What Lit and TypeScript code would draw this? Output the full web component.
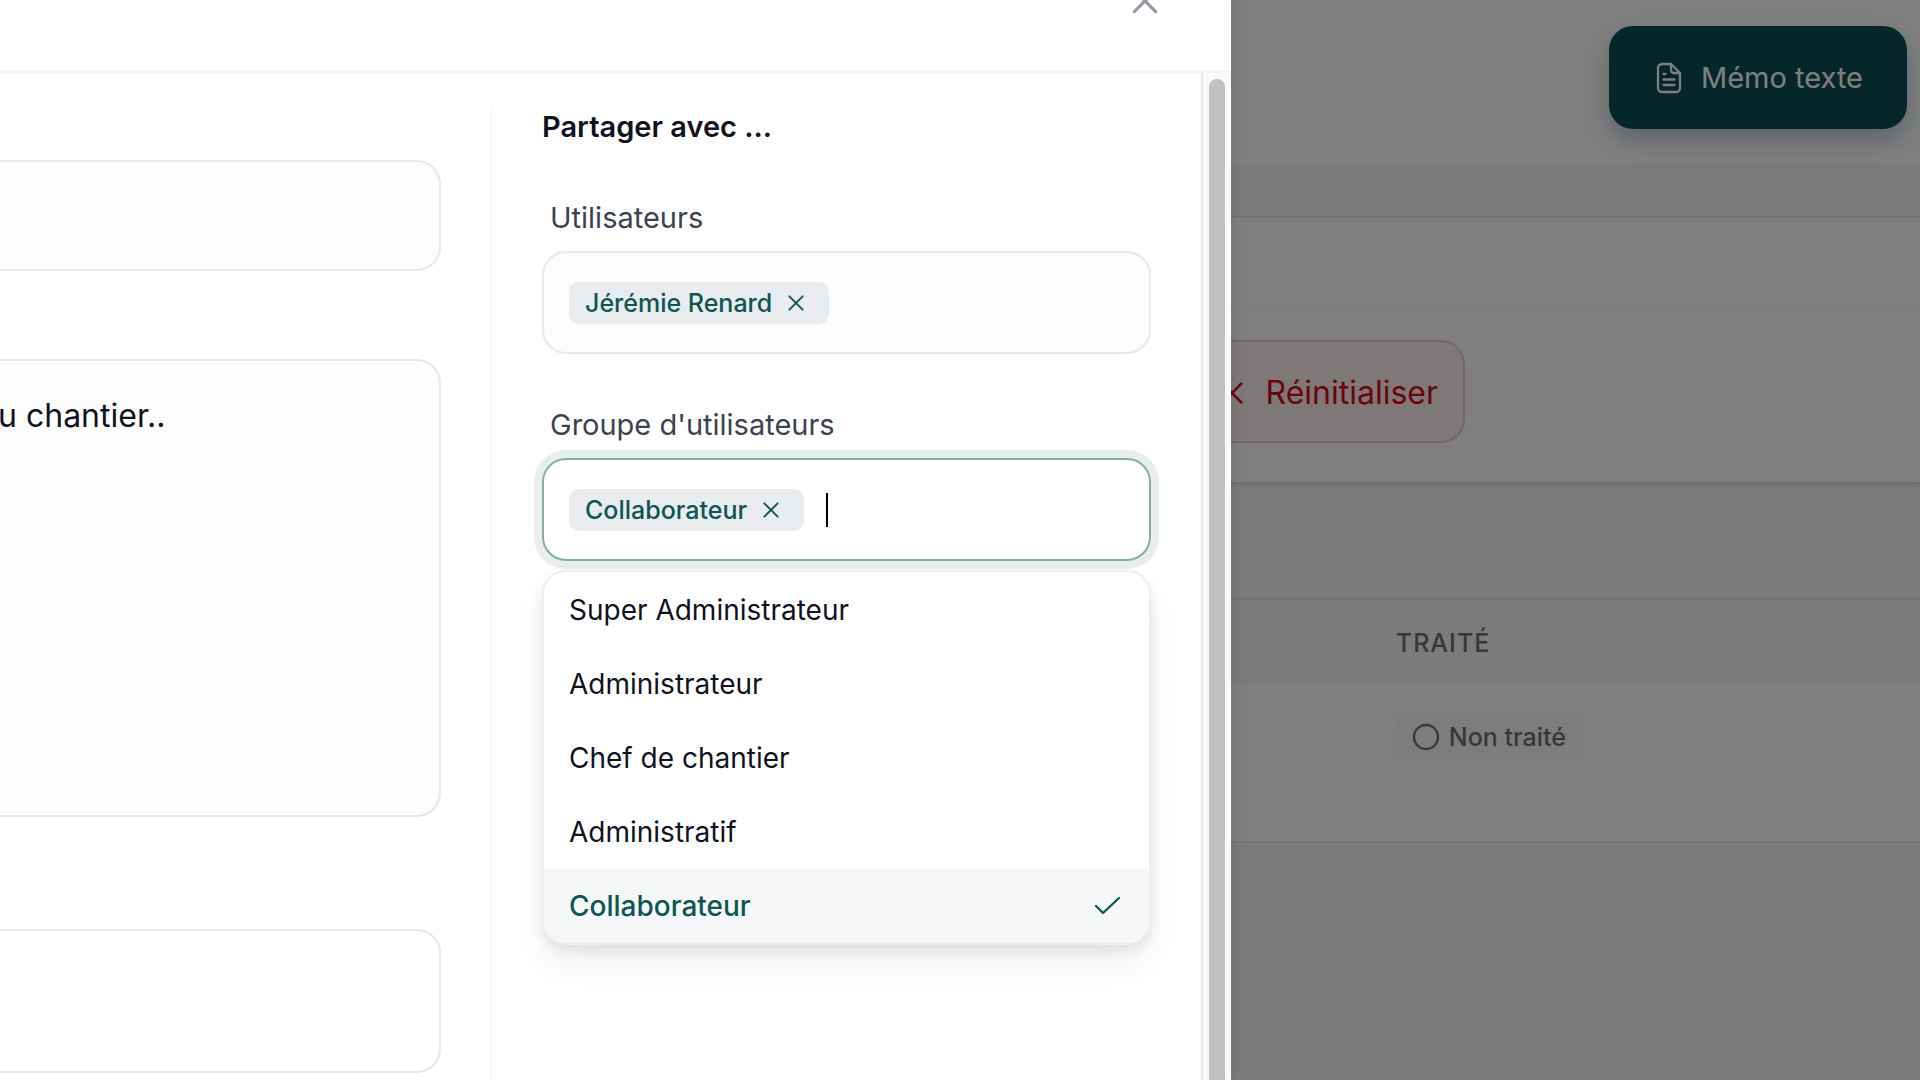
import { LitElement, html, css } from "lit";
import { customElement, state } from "lit/decorators.js";

const cross = (size: string) => html`<svg class="icon ${size}" viewBox="0 0 24 24" aria-hidden="true">
  <path d="M4 4 20 20M20 4 4 20" />
</svg>`;

@customElement("app-root")
export class AppRoot extends LitElement {
  @state() private users = ["Jérémie Renard"];
  @state() private groups = ["Collaborateur"];

  private options = [
    "Super Administrateur",
    "Administrateur",
    "Chef de chantier",
    "Administratif",
    "Collaborateur",
  ];

  static styles = css`
    :host {
      display: block;
      font-family: Inter, "Liberation Sans", sans-serif;
      color: #10131f;
    }
    * {
      box-sizing: border-box;
    }
    button,
    input,
    textarea {
      font: inherit;
      color: inherit;
      margin: 0;
    }
    button {
      cursor: pointer;
    }
    .screen {
      display: grid;
      grid-template-columns: minmax(0, 1231fr) minmax(0, 689fr);
      grid-template-rows: 100vh;
      overflow: hidden;
    }
    .page,
    .backdrop {
      grid-area: 1 / 1 / 2 / 3;
    }
    .dialog {
      grid-area: 1 / 1 / 2 / 2;
    }
    .icon {
      display: block;
      flex: none;
      fill: none;
      stroke: currentColor;
      stroke-width: 2.3;
      stroke-linecap: round;
      stroke-linejoin: round;
    }
    .s20 {
      width: 20px;
      height: 20px;
    }
    .s28 {
      width: 28px;
      height: 28px;
    }
    .s32 {
      width: 32px;
      height: 32px;
    }
    .s40 {
      width: 40px;
      height: 40px;
    }

    /* page behind the dialog */
    .page {
      background: #f4f8f6;
      min-width: 0;
    }
    .topbar {
      display: flex;
      justify-content: flex-end;
      align-items: flex-start;
      height: 164px;
      padding: 26px 13px 0;
      background: #ffffff;
    }
    .memo {
      display: flex;
      align-items: center;
      gap: 12px;
      height: 103px;
      padding: 0 44px 0 40px;
      border: 0;
      border-radius: 24px;
      background: #0c4e55;
      color: #ffffff;
      font-size: 29px;
      box-shadow: 0 12px 24px rgba(40, 80, 110, 0.3);
    }
    .filters {
      margin-top: 52px;
      border-top: 2px solid #e6e9e8;
      border-bottom: 2px solid #dcdfde;
      background: #ffffff;
      box-shadow: 0 2px 4px rgba(0, 0, 0, 0.06);
    }
    .filters-head {
      height: 92px;
      border-bottom: 1px solid #f4f5f5;
    }
    .filters-body {
      display: grid;
      grid-template-columns: minmax(0, 1465fr) minmax(0, 455fr);
      padding: 30px 0 39px;
    }
    .reset {
      justify-self: end;
      display: flex;
      align-items: center;
      gap: 20px;
      height: 103px;
      padding: 2px 25px 0;
      border: 2px solid #f3c6cb;
      border-radius: 24px;
      background: #fdf0f0;
      color: #d8081c;
      font-size: 32px;
    }
    .table {
      width: 100%;
      margin-top: 114px;
      border-collapse: collapse;
      table-layout: fixed;
      border-top: 2px solid #e3e7e5;
      border-bottom: 2px solid #e9ecea;
      background: #ffffff;
      font-size: 25px;
      font-weight: 500;
      color: #6c7078;
    }
    .table th {
      height: 86px;
      padding: 0;
      background: #f4f8f6;
      text-align: left;
      font-weight: 500;
      letter-spacing: 1px;
      text-transform: uppercase;
    }
    .table td {
      height: 157px;
      padding: 31px 0 0;
      vertical-align: top;
    }
    .col-rest {
      width: 72.7%;
    }
    .badge {
      display: flex;
      align-items: center;
      gap: 9px;
      width: fit-content;
      height: 42px;
      padding: 0 16px;
      border-radius: 8px;
      background: #f8faf9;
    }
    .backdrop {
      background: rgba(0, 0, 0, 0.5);
    }

    /* dialog */
    .dialog {
      display: flex;
      flex-direction: column;
      min-width: 0;
      min-height: 0;
      background: #ffffff;
      box-shadow: 0 0 14px rgba(0, 0, 0, 0.12);
    }
    .dialog-head {
      display: flex;
      flex: none;
      align-items: center;
      justify-content: flex-end;
      height: 142px;
      margin-top: -69px;
      padding-right: 70px;
      border-bottom: 2px solid #f5f6f6;
    }
    .close {
      padding: 0;
      border: 0;
      background: none;
      color: #9398a3;
    }
    .dialog-body {
      display: flex;
      flex: 1;
      min-height: 0;
      overflow: hidden;
    }
    .columns {
      flex: 1;
      min-width: 0;
      display: grid;
      grid-template-columns: minmax(0, 491fr) minmax(0, 710fr);
      padding-top: 34px;
    }
    .memo-fields {
      display: flex;
      flex-direction: column;
      padding: 53px 50px 0 0;
      margin-left: -28px;
    }
    .box {
      display: block;
      width: 100%;
      border: 2px solid #e6e8eb;
      border-radius: 24px;
      background: #fcfcfd;
      outline: 0;
      resize: none;
    }
    .title {
      height: 111px;
      padding: 0 24px;
      font-size: 32px;
    }
    .text {
      height: 458px;
      margin-top: 88px;
      padding: 33px 24px;
      font-size: 32px;
      line-height: 44px;
      overflow: hidden;
    }
    .files {
      height: 144px;
      margin-top: 112px;
      background: #ffffff;
    }
    .share {
      padding: 0 50px;
      border-left: 1px solid #f0f1f3;
      font-size: 28px;
      line-height: 40px;
    }
    .share-title {
      margin: 0;
      font-size: 29px;
      font-weight: 600;
    }
    .label {
      display: block;
      margin: 51px 0 13px;
      padding-left: 8px;
      color: #3d4252;
      font-size: 29px;
    }
    .picker {
      position: relative;
    }
    .field {
      display: flex;
      align-items: center;
      height: 103px;
      padding: 0 25px;
      border: 2px solid #e6e8eb;
      border-radius: 24px;
      background: #fcfcfd;
    }
    .field.open {
      border-color: #86aea8;
      background: #ffffff;
      box-shadow: 0 0 0 8px #e8eeee;
    }
    .chip {
      display: flex;
      flex: none;
      align-items: center;
      gap: 14px;
      height: 42px;
      padding: 0 23px 0 16px;
      border-radius: 10px;
      background: #e8ecee;
      color: #0d5651;
      font-size: 25px;
      font-weight: 500;
    }
    .chip-x {
      padding: 0;
      border: 0;
      background: none;
    }
    .caret {
      flex: none;
      width: 2px;
      height: 34px;
      margin-left: 22px;
      background: #000000;
    }
    .query {
      flex: 1;
      min-width: 0;
      padding: 0;
      border: 0;
      outline: 0;
      background: transparent;
      caret-color: transparent;
    }
    .menu {
      position: absolute;
      top: calc(100% + 9px);
      left: 0;
      right: 0;
      padding-top: 1px;
      border: 2px solid #eceef0;
      border-radius: 24px;
      background: #ffffff;
      overflow: hidden;
      box-shadow: 0 20px 36px rgba(0, 0, 0, 0.06), 0 6px 12px rgba(0, 0, 0, 0.08);
    }
    .option {
      display: flex;
      align-items: center;
      justify-content: space-between;
      width: 100%;
      height: 74px;
      padding: 0 25px;
      border: 0;
      background: none;
      text-align: left;
    }
    .option.selected {
      background: #f4f6f8;
      color: #0d5651;
      font-weight: 500;
    }
    .track {
      flex: none;
      width: 30px;
      padding: 6px 6px 0;
      border-left: 2px solid #e8e8e8;
      background: #fafafa;
    }
    .thumb {
      height: 100%;
      border-radius: 8px 8px 0 0;
      background: #c1c1c1;
    }
  `;

  private toggle(name: string) {
    this.groups = this.groups.includes(name)
      ? this.groups.filter((g) => g !== name)
      : [...this.groups, name];
  }

  private chip(name: string, remove: () => void) {
    return html`<span class="chip">${name}<button class="chip-x" aria-label="Retirer ${name}" @click=${remove}>${cross("s20")}</button></span>`;
  }

  private renderPage() {
    return html`<main class="page">
      <header class="topbar">
        <button class="memo">
          <svg class="icon s40" viewBox="0 0 40 40" aria-hidden="true">
            <path d="M22 6H13a4 4 0 0 0-4 4v20a4 4 0 0 0 4 4h14a4 4 0 0 0 4-4V15L22 6v6a3 3 0 0 0 3 3h6M14.500 16h2M14.500 21.500h11M14.500 27h11" />
          </svg>
          Mémo texte
        </button>
      </header>
      <section class="filters">
        <div class="filters-head"></div>
        <div class="filters-body">
          <button class="reset">${cross("s28")}Réinitialiser</button>
        </div>
      </section>
      <table class="table">
        <thead>
          <tr>
            <th class="col-rest"></th>
            <th scope="col">Traité</th>
          </tr>
        </thead>
        <tbody>
          <tr>
            <td></td>
            <td>
              <span class="badge">
                <svg class="icon s28" viewBox="0 0 28 28" aria-hidden="true"><circle cx="14" cy="14" r="12" /></svg>
                Non traité
              </span>
            </td>
          </tr>
        </tbody>
      </table>
    </main>`;
  }

  private renderMenu() {
    return html`<div class="menu" role="listbox" aria-label="Groupe d'utilisateurs">
      ${this.options.map((name) => {
        const on = this.groups.includes(name);
        return html`<button
          class="option ${on ? "selected" : ""}"
          role="option"
          aria-selected=${on}
          @click=${() => this.toggle(name)}
        >
          <span>${name}</span>
          ${on
            ? html`<svg class="icon s32" viewBox="0 0 32 32" aria-hidden="true">
                <path d="M4 16 11 23 27 8" />
              </svg>`
            : ""}
        </button>`;
      })}
    </div>`;
  }

  render() {
    return html`<div class="screen">
      ${this.renderPage()}
      <div class="backdrop"></div>
      <section class="dialog" role="dialog" aria-label="Mémo texte">
        <header class="dialog-head">
          <button class="close" aria-label="Fermer">${cross("s32")}</button>
        </header>
        <div class="dialog-body">
          <div class="columns">
            <div class="memo-fields">
              <input class="box title" aria-label="Titre" />
              <textarea class="box text" aria-label="Mémo" .value=${"u chantier.."}></textarea>
              <div class="box files"></div>
            </div>
            <div class="share">
              <h2 class="share-title">Partager avec ...</h2>
              <label class="label" for="users">Utilisateurs</label>
              <div class="field">
                ${this.users.map((u) => this.chip(u, () => (this.users = this.users.filter((x) => x !== u))))}
                <input class="query" id="users" />
              </div>
              <label class="label" for="groups">Groupe d'utilisateurs</label>
              <div class="picker">
                <div class="field open">
                  ${this.groups.map((g) => this.chip(g, () => this.toggle(g)))}
                  <span class="caret"></span>
                  <input class="query" id="groups" />
                </div>
                ${this.renderMenu()}
              </div>
            </div>
          </div>
          <div class="track" aria-hidden="true"><div class="thumb"></div></div>
        </div>
      </section>
    </div>`;
  }
}
